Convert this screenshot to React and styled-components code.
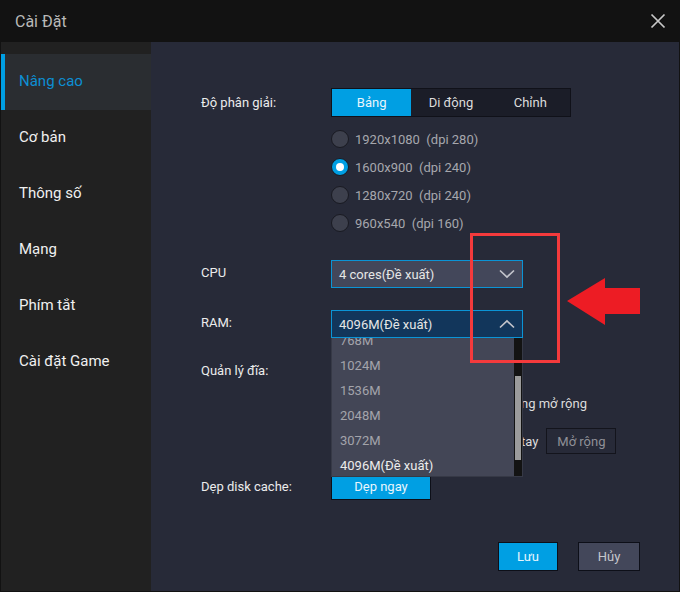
import React from "react";
import styled, { createGlobalStyle } from "styled-components";

const Global = createGlobalStyle`
  html, body { margin: 0; padding: 0; background: #121212; }
  * { box-sizing: border-box; }
  body { font-family: Roboto, "Open Sans", "Liberation Sans", sans-serif; }
`;

const Dialog = styled.div`
  position: relative;
  width: 680px;
  height: 592px;
  display: flex;
  flex-direction: column;
  background: #121212;
  padding: 0 1px 1px;
  overflow: hidden;
`;

const TitleBar = styled.header`
  height: 42px;
  flex: none;
  display: flex;
  align-items: center;
  justify-content: space-between;
  padding: 0 13px 0 14px;
`;

const Title = styled.h1`
  margin: 0;
  font-size: 16px;
  font-weight: 400;
  color: #b9b9b9;
`;

const CloseButton = styled.button`
  width: 16px;
  height: 16px;
  padding: 0;
  border: 0;
  background: none;
  display: flex;
`;

const Body = styled.div`
  flex: 1;
  min-height: 0;
  display: flex;
`;

const Sidebar = styled.nav`
  width: 150px;
  flex: none;
  background: #212121;
  padding-top: 12px;
  display: flex;
  flex-direction: column;
`;

const Tab = styled.div`
  height: 56px;
  display: flex;
  align-items: center;
  padding: 0 0 3px ${(p) => (p.$active ? "14px" : "18px")};
  font-size: 15px;
  color: ${(p) => (p.$active ? "#0d8fd3" : "#f0f0f0")};
  background: ${(p) => (p.$active ? "#2a2d31" : "transparent")};
  border-left: ${(p) => (p.$active ? "4px solid #009fe3" : "0")};
`;

const Main = styled.main`
  flex: 1;
  background: #272a38;
  padding: 46px 39px 20px 50px;
  display: flex;
  flex-direction: column;
`;

const Row = styled.div`
  display: grid;
  grid-template-columns: 130px 1fr;
  margin-top: ${(p) => p.$top || 0}px;
`;

const Label = styled.div`
  font-size: 13px;
  color: #ececec;
  line-height: ${(p) => p.$line || 28}px;
`;

const Stack = styled.div`
  display: flex;
  flex-direction: column;
  align-items: flex-start;
`;

const Segmented = styled.div`
  width: 240px;
  height: 29px;
  display: flex;
  background: #1b1d28;
  border: 1px solid #101119;
`;

const Segment = styled.div`
  width: 79.5px;
  display: flex;
  align-items: center;
  justify-content: center;
  font-size: 13px;
  color: ${(p) => (p.$active ? "#e8f6fd" : "#dcdcdc")};
  background: ${(p) => (p.$active ? "#009fe3" : "transparent")};
`;

const RadioList = styled.div`
  display: flex;
  flex-direction: column;
  margin-top: 8px;
`;

const RadioRow = styled.div`
  height: 28px;
  display: flex;
  align-items: center;
  gap: 6px;
  font-size: 13px;
  color: #a6a7ad;
  white-space: pre;
`;

const RadioDot = styled.span`
  width: 18px;
  height: 18px;
  flex: none;
  border-radius: 50%;
  border: 1px solid #191a22;
  background: ${(p) => (p.$on ? "#009fe3" : "#3d404d")};
  display: flex;
  align-items: center;
  justify-content: center;
  &::after {
    content: "";
    display: ${(p) => (p.$on ? "block" : "none")};
    width: 8px;
    height: 8px;
    border-radius: 50%;
    background: #fff;
  }
`;

const SelectWrap = styled.div`
  position: relative;
  width: 192px;
`;

const Select = styled.div`
  height: 28px;
  display: flex;
  align-items: center;
  justify-content: space-between;
  padding: 0 7px;
  border: 1px solid #0b94d6;
  background: ${(p) => (p.$open ? "#12365b" : "#43475a")};
  font-size: 13px;
  color: #e6e6e6;
`;

const Menu = styled.div`
  position: absolute;
  z-index: 2;
  top: 28px;
  left: 0;
  width: 192px;
  height: 139px;
  background: #434656;
  border: 1px solid #363946;
  border-top: 0;
  overflow: hidden;
`;

const MenuItems = styled.div`
  margin-top: -10px;
`;

const MenuItem = styled.div`
  height: 25px;
  display: flex;
  align-items: center;
  padding-left: 8px;
  font-size: 13px;
  color: ${(p) => (p.$active ? "#ececec" : "#a3a4ab")};
`;

const Track = styled.div`
  position: absolute;
  top: 0;
  right: 0;
  width: 8px;
  height: 100%;
  background: #131313;
`;

const Thumb = styled.div`
  margin-top: 38px;
  margin-left: 1px;
  width: 6px;
  height: 84px;
  background: #9b9b9b;
`;

const DiskOptions = styled.div`
  display: flex;
  flex-direction: column;
  padding: 28px 0 0 190px;
`;

const DiskOption = styled.div`
  height: 38px;
  display: flex;
  align-items: center;
  gap: 8px;
  font-size: 13px;
  color: #dcdcdc;
  white-space: pre;
`;

const GhostButton = styled.div`
  width: 70px;
  height: 26px;
  flex: none;
  display: flex;
  align-items: center;
  justify-content: center;
  border: 1px solid #13141c;
  background: #272a38;
  font-size: 13px;
  color: #8f9097;
`;

const PrimarySmall = styled.div`
  width: 100px;
  height: 28px;
  display: flex;
  align-items: center;
  justify-content: center;
  padding-top: 1px;
  border: 1px solid #0d0f18;
  background: #009fe3;
  font-size: 13px;
  color: #e8f6fd;
`;

const Footer = styled.footer`
  margin-top: auto;
  display: flex;
  justify-content: flex-end;
  gap: 20px;
`;

const FooterButton = styled.div`
  width: ${(p) => p.$w}px;
  height: 29px;
  display: flex;
  align-items: center;
  justify-content: center;
  border: 1px solid #0d0f18;
  background: ${(p) => (p.$primary ? "#009fe3" : "#43475a")};
  font-size: 13px;
  color: ${(p) => (p.$primary ? "#e8f6fd" : "#c6c7cc")};
`;

const Callout = styled.div`
  position: absolute;
  z-index: 3;
  left: 470px;
  top: 233px;
  width: 90px;
  height: 130px;
  border: 3px solid #f43a3c;
`;

const ArrowSvg = styled.svg`
  position: absolute;
  z-index: 3;
  left: 567px;
  top: 278px;
`;

const Chevron = ({ up }) => (
  <svg width="16" height="10" viewBox="0 0 16 10" fill="none">
    <path
      d={up ? "M1 8.5 L8 2 L15 8.5" : "M1 1.5 L8 8 L15 1.5"}
      stroke="#c3c4cb"
      strokeWidth="1.7"
    />
  </svg>
);

const resolutions = [
  ["1920x1080  (dpi 280)", false],
  ["1600x900  (dpi 240)", true],
  ["1280x720  (dpi 240)", false],
  ["960x540  (dpi 160)", false],
];

const tabs = ["Nâng cao", "Cơ bản", "Thông số", "Mạng", "Phím tắt", "Cài đặt Game"];
const ram = ["768M", "1024M", "1536M", "2048M", "3072M"];

export default function App() {
  return (
    <>
      <Global />
      <Dialog>
        <TitleBar>
          <Title>Cài Đặt</Title>
          <CloseButton aria-label="Đóng">
            <svg width="16" height="16" viewBox="0 0 16 16">
              <path d="M1.5 1.5 L14.5 14.5 M14.5 1.5 L1.5 14.5" stroke="#c8c8c8" strokeWidth="1.7" />
            </svg>
          </CloseButton>
        </TitleBar>
        <Body>
          <Sidebar>
            {tabs.map((t, i) => (
              <Tab key={t} $active={i === 0}>{t}</Tab>
            ))}
          </Sidebar>
          <Main>
            <Row>
              <Label $line={29}>Độ phân giải:</Label>
              <Stack>
                <Segmented>
                  <Segment $active>Bảng</Segment>
                  <Segment>Di động</Segment>
                  <Segment>Chỉnh</Segment>
                </Segmented>
                <RadioList>
                  {resolutions.map(([text, on]) => (
                    <RadioRow key={text}>
                      <RadioDot $on={on} />
                      {text}
                    </RadioRow>
                  ))}
                </RadioList>
              </Stack>
            </Row>
            <Row $top={23}>
              <Label $line={26}>CPU</Label>
              <SelectWrap>
                <Select>
                  4 cores(Đề xuất)
                  <Chevron />
                </Select>
              </SelectWrap>
            </Row>
            <Row $top={22}>
              <Label $line={26}>RAM:</Label>
              <SelectWrap>
                <Select $open>
                  4096M(Đề xuất)
                  <Chevron up />
                </Select>
                <Menu>
                  <MenuItems>
                    {ram.map((r) => (
                      <MenuItem key={r}>{r}</MenuItem>
                    ))}
                    <MenuItem $active>4096M(Đề xuất)</MenuItem>
                  </MenuItems>
                  <Track>
                    <Thumb />
                  </Track>
                </Menu>
              </SelectWrap>
            </Row>
            <Row $top={18}>
              <Label $line={30}>Quản lý đĩa:</Label>
              <DiskOptions>
                <DiskOption>ng mở rộng</DiskOption>
                <DiskOption>
                  tay
                  <GhostButton>Mở rộng</GhostButton>
                </DiskOption>
              </DiskOptions>
            </Row>
            <Row $top={12}>
              <Label $line={30}>Dẹp disk cache:</Label>
              <PrimarySmall>Dẹp ngay</PrimarySmall>
            </Row>
            <Footer>
              <FooterButton $primary $w={60}>Lưu</FooterButton>
              <FooterButton $w={62}>Hủy</FooterButton>
            </Footer>
          </Main>
        </Body>
        <Callout />
        <ArrowSvg width="73" height="47" viewBox="0 0 73 47">
          <path d="M0 23 L38 0 V10 H73 V36 H38 V47 Z" fill="#ed1c24" />
        </ArrowSvg>
      </Dialog>
    </>
  );
}
